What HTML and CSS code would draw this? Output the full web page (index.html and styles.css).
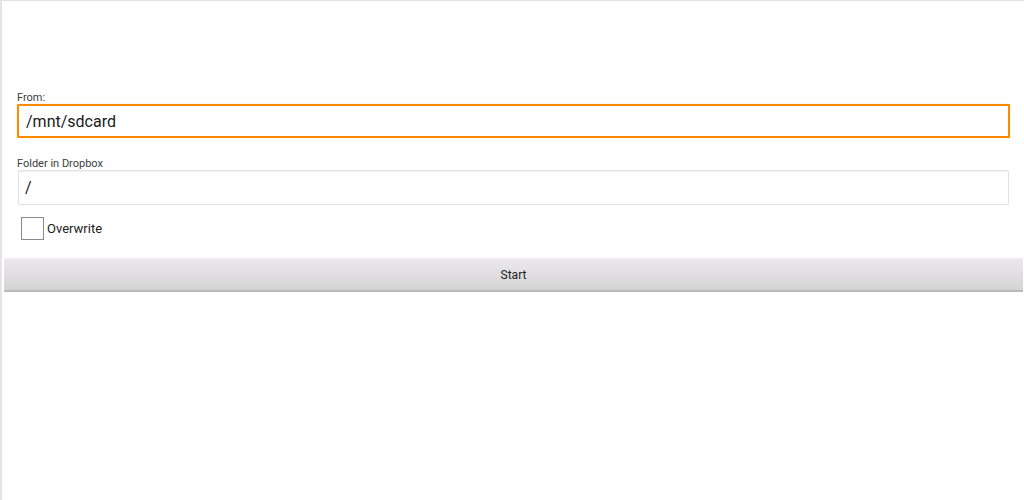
FILE: index.html
```html
<!DOCTYPE html>
<html lang="en">
<head>
    <meta charset="UTF-8">
    <title>Upload to Dropbox</title>
    <link rel="stylesheet" href="styles.css">
</head>
<body>
    <div class="screen">
        <div class="form">
            <label class="field-label" for="from">From:</label>
            <input type="text" id="from" class="text-input focused" value="/mnt/sdcard">

            <label class="field-label" for="folder">Folder in Dropbox</label>
            <input type="text" id="folder" class="text-input" value="/">

            <label class="check-row">
                <span class="check-box"></span>
                <span class="check-text">Overwrite</span>
            </label>
        </div>
        <button class="start-btn">Start</button>
    </div>
</body>
</html>
```

FILE: styles.css
```css
html, body {
    margin: 0;
    padding: 0;
    height: 100%;
}
body {
    font-family: Roboto, "Noto Sans", sans-serif;
    background: #fff;
    color: #222;
}
.screen {
    box-sizing: border-box;
    height: 500px;
    border-top: 1px solid #e2e2e2;
    border-left: 2px solid #e4e4e4;
    padding: 90px 0 0 2px;
}
.form {
    display: flex;
    flex-direction: column;
    padding: 0 14px 0 13px;
}
.field-label {
    font-size: 11px;
    color: #3c3c3c;
    line-height: 13px;
}
.text-input {
    box-sizing: border-box;
    font-family: Roboto, "Noto Sans", sans-serif;
    font-size: 16px;
    color: #1a1a1a;
    height: 35px;
    padding: 0 6px;
    border: 1px solid #e3e3e3;
    border-radius: 1px;
    box-shadow: inset 0 1px 1px #f0f0f0;
    background: #fff;
    margin: 0 1px 12px 1px;
    outline: none;
}
.text-input.focused {
    border: 2px solid #ff8c00;
    box-shadow: 0 0 1px #ffb866;
    margin: 0 0 19px 0;
    height: 34px;
    padding: 0 7px;
}
.check-row {
    display: flex;
    align-items: center;
    gap: 3px;
    margin: 0 0 0 4px;
}
.check-box {
    box-sizing: border-box;
    width: 23px;
    height: 23px;
    border: 1px solid #8a8a8a;
    background: #fff;
}
.check-text {
    font-size: 13px;
    color: #222;
}
.start-btn {
    display: block;
    box-sizing: border-box;
    width: 1019px;
    height: 34px;
    margin: 18px 0 0 0;
    border: none;
    border-top: 1px solid #f0eff0;
    border-bottom: 2px solid #b9b9b9;
    background: linear-gradient(#ebe9eb, #d5d4d5);
    font-family: Roboto, "Noto Sans", sans-serif;
    font-size: 12px;
    color: #222;
    padding: 0;
}
```
